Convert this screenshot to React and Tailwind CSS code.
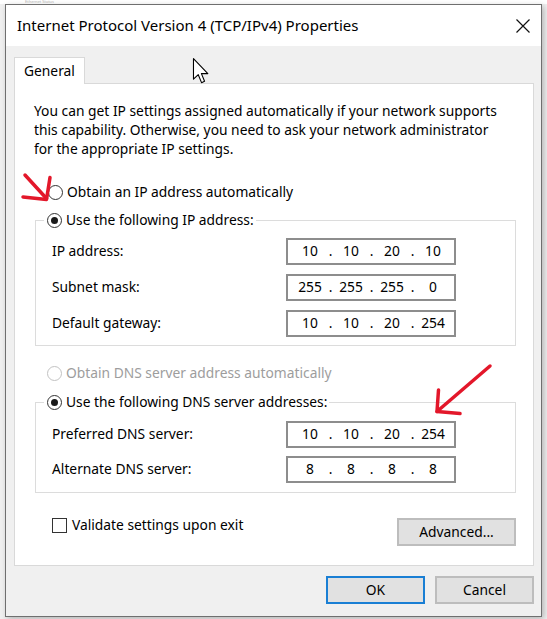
import React from 'react';

// Radio button, Windows 10 look
const Radio = ({ checked, disabled }) => (
    <span
        className={`w-[15px] h-[15px] rounded-full border bg-white flex items-center justify-center shrink-0 ${
            disabled ? 'border-[#c2c2c2]' : 'border-[#333333]'
        }`}
    >
        {checked && <span className="w-[7px] h-[7px] rounded-full bg-[#1a1a1a]" />}
    </span>
);

const IpField = ({ parts }) => (
    <div className="w-[170px] h-[27px] border-2 border-[#8d8d8d] bg-white flex items-center pl-[7px]">
        {parts.map((p, i) => (
            <React.Fragment key={i}>
                {i > 0 && <span className="w-[11px] text-center">.</span>}
                <span className="w-[30px] text-center">{p}</span>
            </React.Fragment>
        ))}
    </div>
);

const Row = ({ label, parts }) => (
    <div className="flex items-center pl-[16px]">
        <span className="w-[234px]">{label}</span>
        <IpField parts={parts} />
    </div>
);

const App = () => {
    return (
        <div className="w-[547px] h-[619px] bg-[#f0f0f0] relative overflow-hidden font-['Noto_Sans','DejaVu_Sans',sans-serif] text-[13.8px] text-black">
            {/* janela de fundo */}
            <div className="h-[4px] bg-white overflow-hidden pl-[25px] flex items-center">
                <span className="text-[#b0b0b0] text-[4px] leading-[4px]">Ethernet Status</span>
            </div>

            {/* diálogo */}
            <div className="ml-[5px] w-[537px] h-[613px] border border-[#6f6f6f] bg-[#f0f0f0] flex flex-col shadow-[2px_2px_6px_rgba(0,0,0,0.25)]">
                {/* barra de título */}
                <div className="h-[41px] bg-white flex items-center justify-between pl-[11px] pr-[11px]">
                    <span className="text-[15px]">Internet Protocol Version 4 (TCP/IPv4) Properties</span>
                    <svg width="14" height="14" viewBox="0 0 14 14">
                        <path d="M0.5 0.5 L13.5 13.5 M13.5 0.5 L0.5 13.5" stroke="#111" strokeWidth="1.2" fill="none" />
                    </svg>
                </div>

                <div className="pl-[8px] pr-[7px] pt-[11px]">
                    {/* aba */}
                    <div className="relative z-10 w-[71px] h-[27px] -mb-[1px] bg-white border border-b-0 border-[#d9d9d9] pl-[9px] flex items-center">
                        General
                    </div>

                    {/* painel */}
                    <div className="h-[483px] bg-white border border-[#d9d9d9] pl-[20px] pr-[17px] pt-[17px]">
                        <p className="-ml-[1px] leading-[19px]">
                            You can get IP settings assigned automatically if your network supports
                            <br />
                            this capability. Otherwise, you need to ask your network administrator
                            <br />
                            for the appropriate IP settings.
                        </p>

                        <div className="mt-[26px] ml-[13px] h-[17px] flex items-center gap-[4px]">
                            <Radio />
                            <span>Obtain an IP address automatically</span>
                        </div>

                        <fieldset className="mt-[11px] border border-[#dcdcdc] pt-[9px] pb-[8px] flex flex-col gap-[9px]">
                            <legend className="ml-[8px] pl-[3px] pr-[2px] h-[17px] flex items-center gap-[4px]">
                                <Radio checked />
                                <span>Use the following IP address:</span>
                            </legend>
                            <Row label="IP address:" parts={['10', '10', '20', '10']} />
                            <Row label="Subnet mask:" parts={['255', '255', '255', '0']} />
                            <Row label="Default gateway:" parts={['10', '10', '20', '254']} />
                        </fieldset>

                        <div className="mt-[19px] ml-[12px] h-[17px] flex items-center gap-[4px] text-[#9d9d9d]">
                            <Radio disabled />
                            <span>Obtain DNS server address automatically</span>
                        </div>

                        <fieldset className="mt-[12px] border border-[#dcdcdc] pt-[10px] pb-[9px] flex flex-col gap-[8px]">
                            <legend className="ml-[8px] pl-[3px] pr-[2px] h-[17px] flex items-center gap-[4px]">
                                <Radio checked />
                                <span>Use the following DNS server addresses:</span>
                            </legend>
                            <Row label="Preferred DNS server:" parts={['10', '10', '20', '254']} />
                            <Row label="Alternate DNS server:" parts={['8', '8', '8', '8']} />
                        </fieldset>

                        <div className="mt-[24px] flex items-start justify-between">
                            <div className="ml-[17px] h-[17px] flex items-center gap-[5px]">
                                <span className="w-[15px] h-[15px] border border-[#333333] bg-white" />
                                <span>Validate settings upon exit</span>
                            </div>
                            <button className="mt-[1px] w-[119px] h-[28px] bg-[#e1e1e1] border-2 border-[#bdbdbd]">
                                Advanced...
                            </button>
                        </div>
                    </div>

                    {/* botões */}
                    <div className="mt-[10px] flex justify-end gap-[10px]">
                        <button className="w-[99px] h-[28px] bg-[#e1e1e1] border-2 border-[#1a7fd4]">OK</button>
                        <button className="w-[99px] h-[28px] bg-[#e1e1e1] border-2 border-[#bdbdbd]">Cancel</button>
                    </div>
                </div>
            </div>

            {/* cursor do mouse */}
            <svg className="absolute left-[192px] top-[58px]" width="18" height="26" viewBox="0 0 12 19">
                <path d="M0.5 0.5 L0.5 15.5 L4 12.2 L6.4 18 L8.6 17 L6.3 11.4 L11 11.4 Z" fill="#fff" stroke="#000" strokeWidth="0.8" strokeLinejoin="round" />
            </svg>

            {/* setas vermelhas de anotação */}
            <svg className="absolute left-0 top-0 pointer-events-none" width="547" height="619">
                <g stroke="#e3172a" strokeWidth="3.5" strokeLinecap="round" strokeLinejoin="round" fill="none">
                    <path d="M25 175 L46.5 198.5" />
                    <path d="M23 197 L46.5 199.5 L50 177.5" />
                    <path d="M490 366 L437 411.5" />
                    <path d="M438.5 390 L437 411.5 L460 413.5" />
                </g>
            </svg>
        </div>
    );
};

export default App;
